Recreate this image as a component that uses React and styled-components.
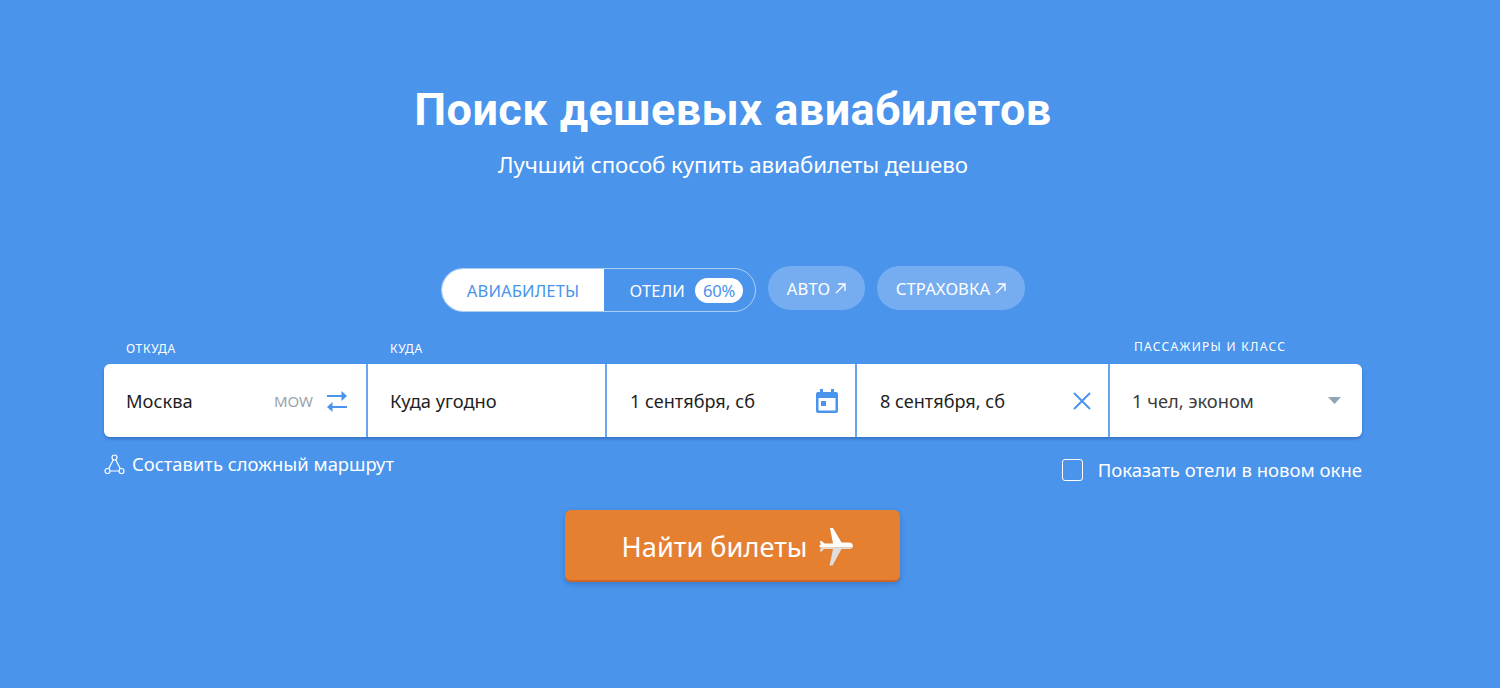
import React from "react";
import styled, { createGlobalStyle } from "styled-components";

const Global = createGlobalStyle`
  html, body { margin: 0; padding: 0; background: #4a94ec; }
  body { font-family: "Noto Sans", "Open Sans", sans-serif; }
`;

const Page = styled.div`
  width: 1500px;
  height: 688px;
  box-sizing: border-box;
  background: #4a94ec;
  padding: 83px 138px 0 104px;
  color: #fff;
  overflow: hidden;
`;
const Hero = styled.header`
  display: flex;
  flex-direction: column;
  align-items: center;
`;
const Title = styled.h1`
  margin: 0;
  font: 700 45px/54px Roboto, sans-serif;
  letter-spacing: 0.45px;
  white-space: nowrap;
  color: #fff;
`;
const Subtitle = styled.p`
  margin: 13px 0 0;
  font: 400 22.3px/30px "Noto Sans", sans-serif;
  letter-spacing: -0.1px;
  white-space: nowrap;
  color: #fff;
`;
const Tabs = styled.nav`
  display: flex;
  justify-content: center;
  align-items: flex-start;
  gap: 12px;
  margin-top: 86px;
  height: 45px;
`;
const Segmented = styled.div`
  display: flex;
  height: 44px;
  margin-top: 2px;
  box-sizing: border-box;
  border-radius: 22px;
  border: 1px solid rgba(255, 255, 255, 0.55);
  overflow: hidden;
`;
const SegmentActive = styled.div`
  width: 162px;
  display: flex;
  align-items: center;
  justify-content: center;
  background: #fff;
  color: #4a94ec;
  font-size: 16.6px;
  letter-spacing: 0.1px;
`;
const Segment = styled.div`
  width: 151px;
  display: flex;
  align-items: center;
  justify-content: flex-end;
  padding-right: 12px;
  box-sizing: border-box;
  gap: 10px;
  font-size: 16.6px;
  letter-spacing: 0.1px;
  color: #fff;
`;
const Badge = styled.span`
  width: 48px;
  height: 25px;
  border-radius: 13px;
  background: #fff;
  color: #4a94ec;
  font-size: 16.6px;
  line-height: 25px;
  text-align: center;
  letter-spacing: -0.2px;
`;
const ExternalPill = styled.a`
  display: flex;
  align-items: center;
  justify-content: center;
  gap: 5px;
  height: 44px;
  width: ${(p) => p.$w}px;
  border-radius: 22px;
  background: rgba(255, 255, 255, 0.24);
  color: #fff;
  font-size: 16.6px;
  letter-spacing: 0.1px;
`;
const Arrow = styled.svg`
  width: 11px;
  height: 11px;
  fill: none;
  stroke: #fff;
  stroke-width: 1.3;
`;
const Columns = `
  display: grid;
  grid-template-columns: 262px 237px 248px 251px 252px;
  column-gap: 2px;
`;
const LabelRow = styled.div`
  ${Columns}
  margin-top: 26px;
  height: 27px;
`;
const FieldLabel = styled.label`
  grid-column: ${(p) => p.$col};
  padding-left: ${(p) => p.$pad}px;
  margin-top: ${(p) => p.$top}px;
  font-size: 12px;
  line-height: 17px;
  letter-spacing: ${(p) => p.$spacing}px;
  color: #fff;
`;
const Bar = styled.div`
  ${Columns}
  height: 73px;
  border-radius: 6px;
  background: #66a6f3;
  box-shadow: 0 2px 3px rgba(30, 80, 150, 0.45);
  overflow: hidden;
`;
const Field = styled.div`
  display: flex;
  align-items: center;
  background: #fff;
  padding: 0 ${(p) => p.$right}px 0 ${(p) => p.$left}px;
  font-size: ${(p) => p.$size || 18.3}px;
  color: ${(p) => (p.$muted ? "#3b3b3b" : "#1f1f1f")};
`;
const FieldText = styled.span`
  flex: 1;
  white-space: nowrap;
`;
const Code = styled.span`
  font-size: 15px;
  color: #9aa3ab;
  margin-right: 13px;
`;
const IconSvg = styled.svg`
  display: block;
  flex: none;
`;
const Options = styled.div`
  display: flex;
  justify-content: space-between;
  height: 73px;
`;
const RouteLink = styled.a`
  display: flex;
  align-items: center;
  gap: 7px;
  height: 24px;
  margin-top: 15px;
  font-size: 18.4px;
  line-height: 24px;
  color: #fff;
`;
const CheckOption = styled.label`
  display: flex;
  align-items: center;
  gap: 15px;
  height: 24px;
  margin-top: 21px;
  font-size: 18.55px;
  line-height: 24px;
  color: #fff;
`;
const CheckBox = styled.span`
  width: 21px;
  height: 22px;
  box-sizing: border-box;
  border: 1.5px solid #fff;
  border-radius: 3px;
`;
const SearchRow = styled.div`
  display: flex;
  justify-content: center;
  padding-right: 1px;
`;
const SearchButton = styled.button`
  display: flex;
  align-items: center;
  justify-content: center;
  gap: 12px;
  width: 335px;
  height: 72px;
  padding: 4px 0 0 10px;
  border: 0;
  border-bottom: 2px solid #d0652a;
  border-radius: 6px;
  background: #e58030;
  box-shadow: 0 2px 5px rgba(30, 70, 130, 0.35);
  color: #fff;
  font: 400 27.2px/34px "Noto Sans", sans-serif;
`;

const ArrowNE = () => (
  <Arrow viewBox="0 0 11 11">
    <path d="M1 10 10 1M3 1h7v7" />
  </Arrow>
);

const Swap = () => (
  <IconSvg width="22" height="24" viewBox="0 0 22 24" fill="none" stroke="#4a94ec" strokeWidth="2">
    <path d="M1 7h17" />
    <path d="M15.500 2 21 7l-5.500 5z" fill="#4a94ec" stroke="none" />
    <path d="M21 18H4" />
    <path d="M6.500 13 1 18l5.500 5z" fill="#4a94ec" stroke="none" />
  </IconSvg>
);

const Calendar = () => (
  <IconSvg width="24" height="26" viewBox="0 0 24 26">
    <path
      fillRule="evenodd"
      fill="#4a94ec"
      d="M5 1h3v3h8V1h3v3h2a2 2 0 0 1 2 2v17a2 2 0 0 1-2 2H3a2 2 0 0 1-2-2V6a2 2 0 0 1 2-2h2zM3.500 10v12.500h17V10z"
    />
    <rect x="6" y="13" width="5" height="5" fill="#4a94ec" />
  </IconSvg>
);

const Cross = () => (
  <IconSvg width="18" height="18" viewBox="0 0 18 18" stroke="#4a94ec" strokeWidth="2" fill="none">
    <path d="M1 1 17 17M17 1 1 17" />
  </IconSvg>
);

const Caret = () => (
  <IconSvg width="13" height="7" viewBox="0 0 13 7">
    <path d="M0 0h13L6.500 7z" fill="#93a4b4" />
  </IconSvg>
);

const RouteIcon = () => (
  <IconSvg width="21" height="21" viewBox="0 0 21 21" fill="none" stroke="#fff" strokeWidth="1.2">
    <circle cx="10.500" cy="3.500" r="2.500" />
    <circle cx="3.500" cy="17" r="2.500" />
    <circle cx="17.500" cy="17" r="2.500" />
    <path d="M9.300 5.700 4.700 14.800M11.700 5.700l4.600 9.100M6 17h9" />
  </IconSvg>
);

const Plane = () => (
  <IconSvg width="34" height="38" viewBox="0 0 34 38">
    <path
      fill="#fff"
      d="M11 0h3l8.500 14.500H30c2.500 0 4 1.700 4 3.500 0 .5-.2 1-.5 1.500H1.800L0 18l1.800-1.500-1-3.500h1.900l2.800 2.500H14z"
    />
    <path
      fill="#dedede"
      d="M1.800 19.500h31.700c-.8 1-2 1.500-3.500 1.500h-7.500L13.500 37.500h-3L14 21H5L2.500 23.500H.8z"
    />
  </IconSvg>
);

export default function App() {
  return (
    <Page>
      <Global />
      <Hero>
        <Title>Поиск дешевых авиабилетов</Title>
        <Subtitle>Лучший способ купить авиабилеты дешево</Subtitle>
      </Hero>
      <Tabs>
        <Segmented>
          <SegmentActive>АВИАБИЛЕТЫ</SegmentActive>
          <Segment>
            ОТЕЛИ <Badge>60%</Badge>
          </Segment>
        </Segmented>
        <ExternalPill $w={97}>
          АВТО <ArrowNE />
        </ExternalPill>
        <ExternalPill $w={148}>
          СТРАХОВКА <ArrowNE />
        </ExternalPill>
      </Tabs>
      <LabelRow>
        <FieldLabel $col={1} $pad={22} $top={3} $spacing={0.7}>ОТКУДА</FieldLabel>
        <FieldLabel $col={2} $pad={22} $top={3} $spacing={0.7}>КУДА</FieldLabel>
        <FieldLabel $col={5} $pad={24} $top={1} $spacing={1.3}>ПАССАЖИРЫ И КЛАСС</FieldLabel>
      </LabelRow>
      <Bar>
        <Field $left={22} $right={18}>
          <FieldText>Москва</FieldText>
          <Code>MOW</Code>
          <Swap />
        </Field>
        <Field $left={22} $right={18}>
          <FieldText>Куда угодно</FieldText>
        </Field>
        <Field $left={23} $right={16} $size={18.1}>
          <FieldText>1 сентября, сб</FieldText>
          <Calendar />
        </Field>
        <Field $left={23} $right={17} $size={18.1}>
          <FieldText>8 сентября, сб</FieldText>
          <Cross />
        </Field>
        <Field $left={22} $right={21} $muted>
          <FieldText>1 чел, эконом</FieldText>
          <Caret />
        </Field>
      </Bar>
      <Options>
        <RouteLink>
          <RouteIcon />
          Составить сложный маршрут
        </RouteLink>
        <CheckOption>
          <CheckBox />
          Показать отели в новом окне
        </CheckOption>
      </Options>
      <SearchRow>
        <SearchButton>
          Найти билеты
          <Plane />
        </SearchButton>
      </SearchRow>
    </Page>
  );
}
